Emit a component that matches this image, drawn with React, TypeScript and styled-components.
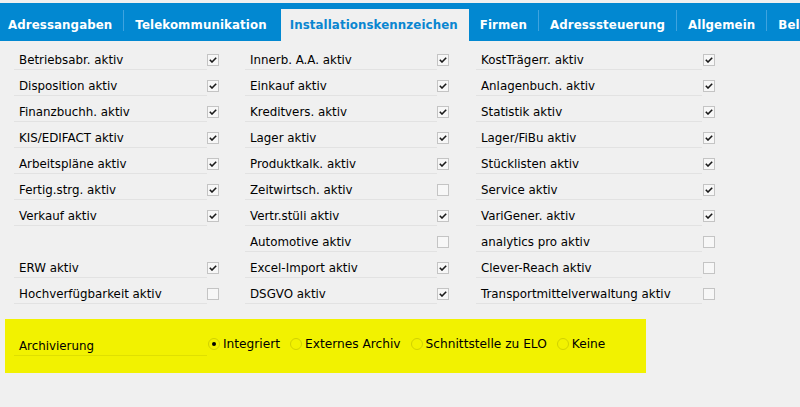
import React from "react";
import styled, { createGlobalStyle } from "styled-components";

const Global = createGlobalStyle`
  html, body { margin: 0; padding: 0; background: #f0f0f0; }
  body { font-family: "DejaVu Sans", Tahoma, sans-serif; color: #000; }
`;

const Page = styled.div`
  width: 800px;
  height: 407px;
  overflow: hidden;
  background: #f0f0f0;
  padding-top: 3px;
  box-sizing: border-box;
`;

const TabBar = styled.div`
  display: flex;
  align-items: flex-end;
  height: 38px;
  background: #0288d1;
  white-space: nowrap;
  overflow: hidden;
`;

const Tab = styled.div<{ $active?: boolean; $sep?: boolean; $first?: boolean }>`
  height: 32px;
  display: flex;
  align-items: center;
  padding: 0 11px 0 ${(p) => (p.$first ? "8px" : p.$active ? "9px" : "11px")};
  font-size: 11.8px;
  letter-spacing: 0.1px;
  font-weight: bold;
  color: ${(p) => (p.$active ? "#0a86d0" : "#ffffff")};
  background: ${(p) => (p.$active ? "#f0f0f0" : "transparent")};
  margin-left: ${(p) => (p.$active ? "3px" : "0")};
  border-left: ${(p) => (p.$sep ? "1px solid #3ea3df" : "none")};
  ${(p) =>
    p.$sep
      ? "border-image: linear-gradient(to bottom, transparent 2px, #3ea3df 2px, #3ea3df 22px, transparent 22px) 1;"
      : ""}
  flex-shrink: 0;
`;

const Grid = styled.div`
  display: grid;
  grid-template-columns: 231px 231px 300px;
  padding-left: 14px;
  margin-top: 3px;
`;

const Cell = styled.div`
  display: flex;
  align-items: flex-start;
  height: 26px;
`;

const Label = styled.div<{ $w: number; $line?: string }>`
  width: ${(p) => p.$w}px;
  height: 26px;
  box-sizing: border-box;
  border-bottom: 1px solid ${(p) => p.$line ?? "#e2e2e2"};
  padding: 0 0 2px 5px;
  display: flex;
  align-items: flex-end;
  font-size: 11.85px;
  line-height: 14px;
  white-space: nowrap;
`;

const Box = styled.div<{ $gap?: number }>`
  width: 12px;
  height: 12px;
  box-sizing: border-box;
  margin-top: 10px;
  margin-left: ${(p) => p.$gap ?? 0}px;
  border: 1px solid #c4c4c4;
  background: #f7f7f7;
  display: flex;
  align-items: center;
  justify-content: center;
`;

const Archive = styled.div`
  margin: 15px 0 0 5px;
  width: 641px;
  height: 54px;
  background: #f2f200;
  box-sizing: border-box;
  padding: 11px 0 0 9px;
  display: flex;
  align-items: flex-start;
`;

const RadioGroup = styled.div`
  display: flex;
  align-items: center;
  margin-top: 7px;
  margin-left: 1px;
  gap: 10px;
`;

const RadioItem = styled.div`
  display: flex;
  align-items: center;
  gap: 3px;
  font-size: 12.2px;
  line-height: 14px;
  white-space: nowrap;
`;

const Circle = styled.div<{ $on?: boolean }>`
  width: 12px;
  height: 12px;
  box-sizing: border-box;
  border-radius: 50%;
  border: 1px solid #d2d200;
  display: flex;
  align-items: center;
  justify-content: center;
  &::after {
    content: "";
    display: ${(p) => (p.$on ? "block" : "none")};
    width: 4px;
    height: 4px;
    border-radius: 50%;
    background: #000;
  }
`;

const Check = () => (
  <svg width="8" height="6" viewBox="0 0 8 6">
    <path d="M0.8 2.8 L3 5 L7.2 0.8" fill="none" stroke="#1a1a1a" strokeWidth="1.6" />
  </svg>
);

type Item = { t: string; c: boolean } | null;

const rows: Item[][] = [
  [{ t: "Betriebsabr. aktiv", c: true }, { t: "Innerb. A.A. aktiv", c: true }, { t: "KostTrägerr. aktiv", c: true }],
  [{ t: "Disposition aktiv", c: true }, { t: "Einkauf aktiv", c: true }, { t: "Anlagenbuch. aktiv", c: true }],
  [{ t: "Finanzbuchh. aktiv", c: true }, { t: "Kreditvers. aktiv", c: true }, { t: "Statistik aktiv", c: true }],
  [{ t: "KIS/EDIFACT aktiv", c: true }, { t: "Lager aktiv", c: true }, { t: "Lager/FiBu aktiv", c: true }],
  [{ t: "Arbeitspläne aktiv", c: true }, { t: "Produktkalk. aktiv", c: true }, { t: "Stücklisten aktiv", c: true }],
  [{ t: "Fertig.strg. aktiv", c: true }, { t: "Zeitwirtsch. aktiv", c: false }, { t: "Service aktiv", c: true }],
  [{ t: "Verkauf aktiv", c: true }, { t: "Vertr.stüli aktiv", c: true }, { t: "VariGener. aktiv", c: true }],
  [null, { t: "Automotive aktiv", c: false }, { t: "analytics pro aktiv", c: false }],
  [{ t: "ERW aktiv", c: true }, { t: "Excel-Import aktiv", c: true }, { t: "Clever-Reach aktiv", c: false }],
  [{ t: "Hochverfügbarkeit aktiv", c: false }, { t: "DSGVO aktiv", c: true }, { t: "Transportmittelverwaltung aktiv", c: false }],
];

const widths = [193, 192, 226];
const gaps = [0, 0, 1];

const tabs = [
  { t: "Adressangaben", first: true },
  { t: "Telekommunikation", sep: true },
  { t: "Installationskennzeichen", active: true },
  { t: "Firmen" },
  { t: "Adresssteuerung", sep: true },
  { t: "Allgemein", sep: true },
  { t: "Belegsteuerung", sep: true },
];

const radios = ["Integriert", "Externes Archiv", "Schnittstelle zu ELO", "Keine"];

export default function App() {
  return (
    <Page>
      <Global />
      <TabBar>
        {tabs.map((tb) => (
          <Tab key={tb.t} $active={tb.active} $sep={tb.sep} $first={tb.first}>
            {tb.t}
          </Tab>
        ))}
      </TabBar>
      <Grid>
        {rows.map((r, ri) =>
          r.map((it, ci) => (
            <Cell key={`${ri}-${ci}`}>
              {it && (
                <>
                  <Label $w={widths[ci]}>{it.t}</Label>
                  <Box $gap={gaps[ci]}>{it.c && <Check />}</Box>
                </>
              )}
            </Cell>
          ))
        )}
      </Grid>
      <Archive>
        <Label $w={193} $line="#e0e000">Archivierung</Label>
        <RadioGroup>
          {radios.map((r, i) => (
            <RadioItem key={r}>
              <Circle $on={i === 0} />
              {r}
            </RadioItem>
          ))}
        </RadioGroup>
      </Archive>
    </Page>
  );
}
